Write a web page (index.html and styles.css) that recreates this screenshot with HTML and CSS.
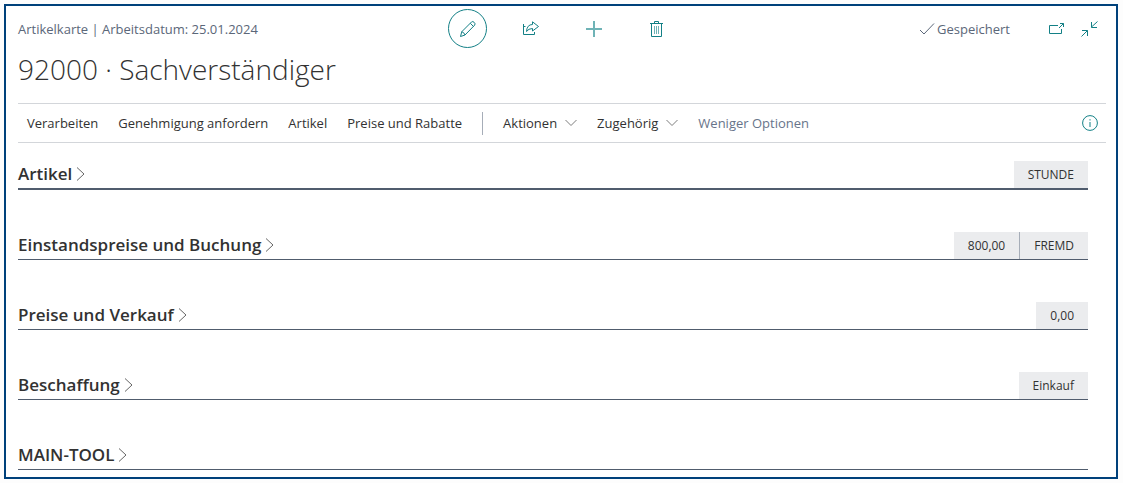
FILE: index.html
```html
<!doctype html>
<html lang="de">
  <head>
    <meta charset="UTF-8" />
    <meta name="viewport" content="width=device-width, initial-scale=1.0" />
    <title>Artikelkarte - 92000 · Sachverständiger</title>
    <link rel="stylesheet" href="styles.css">
  </head>
  <body>
    <main class="card-page">
      <header class="page-header">
        <div class="caption">Artikelkarte | Arbeitsdatum: 25.01.2024</div>
        <div class="record-actions">
          <button type="button" class="icon-button edit" aria-label="Bearbeiten">
            <svg width="18" height="18" viewBox="0 0 18 18">
              <path d="M1.5 16.5l1.3-4.8L12.6 1.9q1.2-.9 2.5.4 1.6 1.5.6 2.8L6 15zM2.8 11.7q2.3.6 3.2 3.3M11.3 3.3l3.3 3.3" />
            </svg>
          </button>
          <button type="button" class="icon-button" aria-label="Teilen">
            <svg width="18" height="18" viewBox="0 0 18 18">
              <path d="M1.5 4v10.5h11V12M1.5 6.5h2M4.5 11.5Q5 4.5 10.5 4.5V1.8l6 4.7-6 4.5V8.5Q6.5 8.5 4.5 11.5z" />
            </svg>
          </button>
          <button type="button" class="icon-button" aria-label="Neu">
            <svg width="18" height="18" viewBox="0 0 18 18">
              <path class="bold" d="M9 1v16M1 9h16" />
            </svg>
          </button>
          <button type="button" class="icon-button" aria-label="Löschen">
            <svg width="18" height="18" viewBox="0 0 18 18">
              <path d="M2 3.5h13M6.5 3.5v-2h4v2M3.5 3.5v13h10v-13" />
              <path class="light" d="M6.500 6v8M8.500 6v8M10.500 6v8" />
            </svg>
          </button>
        </div>
        <div class="page-status">
          <span class="saved">
            <svg width="16" height="14" viewBox="0 0 16 14">
              <path d="M1 8l4 4L15 1.5" />
            </svg>
            Gespeichert
          </span>
          <button type="button" class="small-button" aria-label="In neuem Fenster öffnen">
            <svg width="17" height="16" viewBox="0 0 17 16">
              <path d="M10 4.5H1.500v8h12V8M11 7l4.500-4.500M12 2.500h3.500V6" />
            </svg>
          </button>
          <button type="button" class="small-button" aria-label="Verkleinern">
            <svg width="17" height="16" viewBox="0 0 17 16">
              <path d="M16.500.5l-6 5.500M10.500 1v5.500H16M.5 15.500l6-6M1 9.500h5.500V15" />
            </svg>
          </button>
        </div>
      </header>

      <h1>92000 · Sachverständiger</h1>

      <nav class="action-bar">
        <button type="button">Verarbeiten</button>
        <button type="button">Genehmigung anfordern</button>
        <button type="button">Artikel</button>
        <button type="button">Preise und Rabatte</button>
        <span class="divider"></span>
        <button type="button">
          Aktionen
          <svg width="12" height="8" viewBox="0 0 12 8"><path d="M.5 1L6 6.5 11.5 1" /></svg>
        </button>
        <button type="button">
          Zugehörig
          <svg width="12" height="8" viewBox="0 0 12 8"><path d="M.5 1L6 6.5 11.5 1" /></svg>
        </button>
        <button type="button" class="muted">Weniger Optionen</button>
        <button type="button" class="info" aria-label="Info">
          <svg width="16" height="16" viewBox="0 0 16 16">
            <circle cx="8" cy="8" r="7.4" />
            <path d="M8 7v5M8 4.2v1.3" />
          </svg>
        </button>
      </nav>

      <div class="fast-tabs">
        <section class="fast-tab active">
          <h2>
            <button type="button">
              Artikel
              <svg width="9" height="16" viewBox="0 0 9 16"><path d="M1 1.5L8 8l-7 6.5" /></svg>
            </button>
          </h2>
          <div class="summary"><span>STUNDE</span></div>
        </section>
        <section class="fast-tab">
          <h2>
            <button type="button">
              Einstandspreise und Buchung
              <svg width="9" height="16" viewBox="0 0 9 16"><path d="M1 1.5L8 8l-7 6.5" /></svg>
            </button>
          </h2>
          <div class="summary"><span>800,00</span><span>FREMD</span></div>
        </section>
        <section class="fast-tab">
          <h2>
            <button type="button">
              Preise und Verkauf
              <svg width="9" height="16" viewBox="0 0 9 16"><path d="M1 1.5L8 8l-7 6.5" /></svg>
            </button>
          </h2>
          <div class="summary"><span>0,00</span></div>
        </section>
        <section class="fast-tab">
          <h2>
            <button type="button">
              Beschaffung
              <svg width="9" height="16" viewBox="0 0 9 16"><path d="M1 1.5L8 8l-7 6.5" /></svg>
            </button>
          </h2>
          <div class="summary"><span>Einkauf</span></div>
        </section>
        <section class="fast-tab">
          <h2>
            <button type="button">
              MAIN-TOOL
              <svg width="9" height="16" viewBox="0 0 9 16"><path d="M1 1.5L8 8l-7 6.5" /></svg>
            </button>
          </h2>
        </section>
      </div>
    </main>
  </body>
</html>
```
FILE: styles.css
```css
* {
  box-sizing: border-box;
}

body {
  margin: 0;
  padding: 4px 5px 4px 4px;
  background-color: #fdfdfd;
  color: #323232;
  font-family: "Open Sans", "Noto Sans", sans-serif;
  font-size: 13px;
  line-height: 20px;
}

button {
  display: flex;
  align-items: center;
  padding: 0;
  border: none;
  background: none;
  color: inherit;
  font: inherit;
  white-space: nowrap;
  cursor: pointer;
}

svg {
  flex: none;
  fill: none;
  stroke: currentColor;
}

.card-page {
  padding: 3px 10px 7px 12px;
  border: 2px solid #00417b;
  background-color: #fff;
}

/* Header */
.page-header {
  display: grid;
  grid-template-columns: 1fr auto 1fr;
  align-items: center;
}

.caption,
.saved {
  color: #5b6779;
}

.record-actions {
  display: flex;
  gap: 24px;
  color: #138086;
}

.icon-button {
  justify-content: center;
  width: 39px;
  height: 39px;
  border-radius: 50%;
}

.icon-button.edit {
  border: 1px solid #138086;
}

.bold {
  stroke-width: 2;
  stroke: #6fb3b6;
}

.light {
  stroke: #6fb3b6;
}

.page-status {
  display: flex;
  justify-content: flex-end;
  align-items: center;
  gap: 16px;
  padding-right: 8px;
}

.saved {
  display: flex;
  align-items: center;
  gap: 2px;
  margin-right: 22px;
}

.small-button {
  color: #138086;
}

h1 {
  margin: 0;
  padding: 0 0 13px;
  font-size: 28px;
  font-weight: 300;
  line-height: 42px;
}

/* Action bar */
.action-bar {
  display: flex;
  align-items: center;
  gap: 20px;
  height: 40px;
  padding: 0 8px 0 9px;
  border-top: 1px solid #d3d6da;
  border-bottom: 1px solid #d3d6da;
}

.action-bar button {
  gap: 8px;
}

.action-bar svg {
  stroke: #7d7d7d;
}

.divider {
  width: 1px;
  height: 23px;
  background-color: #a6adb8;
}

.action-bar .muted {
  color: #67748a;
}

.action-bar .info {
  margin-left: auto;
}

.action-bar .info svg {
  stroke: #138086;
}

/* Fast tabs */
.fast-tabs {
  display: flex;
  flex-direction: column;
  gap: 42px;
  padding: 18px 18px 0 0;
}

.fast-tab {
  display: flex;
  justify-content: space-between;
  min-height: 28px;
  border-bottom: 1px solid #505c6d;
}

.fast-tab.active {
  border-bottom: 2px solid #505c6d;
}

h2 {
  margin: 0;
  font-size: 17px;
  font-weight: 600;
  line-height: 26px;
}

h2 button {
  gap: 4px;
}

h2 svg {
  stroke: #666;
}

.summary {
  display: flex;
  font-size: 12px;
  line-height: 27px;
}

.summary span {
  padding: 0 14px;
  background-color: #ebecee;
}

.summary span + span {
  border-left: 1px solid #a6adb8;
}
```
